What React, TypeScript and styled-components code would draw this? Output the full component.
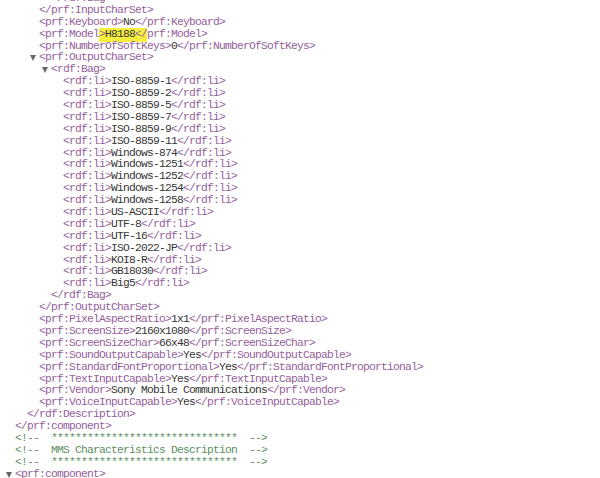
import React from "react";
import styled, { createGlobalStyle } from "styled-components";

const Global = createGlobalStyle`
  html, body { margin: 0; padding: 0; background: #ffffff; }
  body { overflow: hidden; }
`;

const Viewer = styled.div`
  width: 600px;
  height: 478px;
  overflow: hidden;
  background: #ffffff;
  font-family: "Liberation Mono", "DejaVu Sans Mono", monospace;
  font-size: 11.3px;
  letter-spacing: -0.78px;
  line-height: 11.9px;
`;

const Listing = styled.div`
  margin-top: -7px;
  display: flex;
  flex-direction: column;
`;

const Line = styled.div<{ $level: number }>`
  height: 11.9px;
  padding-left: ${(p) => 15 + p.$level * 12}px;
  white-space: pre;
  display: flex;
  align-items: center;
`;

const Tag = styled.span`
  color: #94609a;
`;

const Value = styled.span`
  color: #363636;
`;

const Comment = styled.span`
  color: #5c9060;
`;

const Mark = styled.span`
  background: #f6ee3c;
  padding: 1px 0;
`;

const Toggle = styled.span`
  display: inline-block;
  width: 10px;
  margin-left: -10px;
  height: 11.9px;
  position: relative;
  &::before {
    content: "";
    position: absolute;
    left: 1px;
    top: 3px;
    border-left: 3.5px solid transparent;
    border-right: 3.5px solid transparent;
    border-top: 6px solid #666666;
  }
`;

type Row =
  | { kind: "close"; level: number; name: string }
  | { kind: "open"; level: number; name: string }
  | { kind: "leaf"; level: number; name: string; value: string; mark?: boolean }
  | { kind: "comment"; level: number; text: string };

const charsets = [
  "ISO-8859-1",
  "ISO-8859-2",
  "ISO-8859-5",
  "ISO-8859-7",
  "ISO-8859-9",
  "ISO-8859-11",
  "Windows-874",
  "Windows-1251",
  "Windows-1252",
  "Windows-1254",
  "Windows-1258",
  "US-ASCII",
  "UTF-8",
  "UTF-16",
  "ISO-2022-JP",
  "KOI8-R",
  "GB18030",
  "Big5",
];

const stars = "*".repeat(31);

const rows: Row[] = [
  { kind: "close", level: 3, name: "rdf:Bag" },
  { kind: "close", level: 2, name: "prf:InputCharSet" },
  { kind: "leaf", level: 2, name: "prf:Keyboard", value: "No" },
  { kind: "leaf", level: 2, name: "prf:Model", value: "H8188", mark: true },
  { kind: "leaf", level: 2, name: "prf:NumberOfSoftKeys", value: "0" },
  { kind: "open", level: 2, name: "prf:OutputCharSet" },
  { kind: "open", level: 3, name: "rdf:Bag" },
  ...charsets.map((c) => ({ kind: "leaf" as const, level: 4, name: "rdf:li", value: c })),
  { kind: "close", level: 3, name: "rdf:Bag" },
  { kind: "close", level: 2, name: "prf:OutputCharSet" },
  { kind: "leaf", level: 2, name: "prf:PixelAspectRatio", value: "1x1" },
  { kind: "leaf", level: 2, name: "prf:ScreenSize", value: "2160x1080" },
  { kind: "leaf", level: 2, name: "prf:ScreenSizeChar", value: "66x48" },
  { kind: "leaf", level: 2, name: "prf:SoundOutputCapable", value: "Yes" },
  { kind: "leaf", level: 2, name: "prf:StandardFontProportional", value: "Yes" },
  { kind: "leaf", level: 2, name: "prf:TextInputCapable", value: "Yes" },
  { kind: "leaf", level: 2, name: "prf:Vendor", value: "Sony Mobile Communications" },
  { kind: "leaf", level: 2, name: "prf:VoiceInputCapable", value: "Yes" },
  { kind: "close", level: 1, name: "rdf:Description" },
  { kind: "close", level: 0, name: "prf:component" },
  { kind: "comment", level: 0, text: `<!--  ${stars}  -->` },
  { kind: "comment", level: 0, text: "<!--  MMS Characteristics Description  -->" },
  { kind: "comment", level: 0, text: `<!--  ${stars}  -->` },
  { kind: "open", level: 0, name: "prf:component" },
];

function renderRow(r: Row) {
  switch (r.kind) {
    case "close":
      return <Tag>{`</${r.name}>`}</Tag>;
    case "open":
      return (
        <>
          <Toggle />
          <Tag>{`<${r.name}>`}</Tag>
        </>
      );
    case "comment":
      return <Comment>{r.text}</Comment>;
    case "leaf":
      if (r.mark) {
        return (
          <>
            <Tag>{`<${r.name}`}</Tag>
            <Mark>
              <Tag>{">"}</Tag>
              <Value>{r.value}</Value>
              <Tag>{"</"}</Tag>
            </Mark>
            <Tag>{`${r.name}>`}</Tag>
          </>
        );
      }
      return (
        <>
          <Tag>{`<${r.name}>`}</Tag>
          <Value>{r.value}</Value>
          <Tag>{`</${r.name}>`}</Tag>
        </>
      );
  }
}

export default function App() {
  return (
    <>
      <Global />
      <Viewer>
        <Listing>
          {rows.map((r, i) => (
            <Line key={i} $level={r.level}>
              {renderRow(r)}
            </Line>
          ))}
        </Listing>
      </Viewer>
    </>
  );
}
